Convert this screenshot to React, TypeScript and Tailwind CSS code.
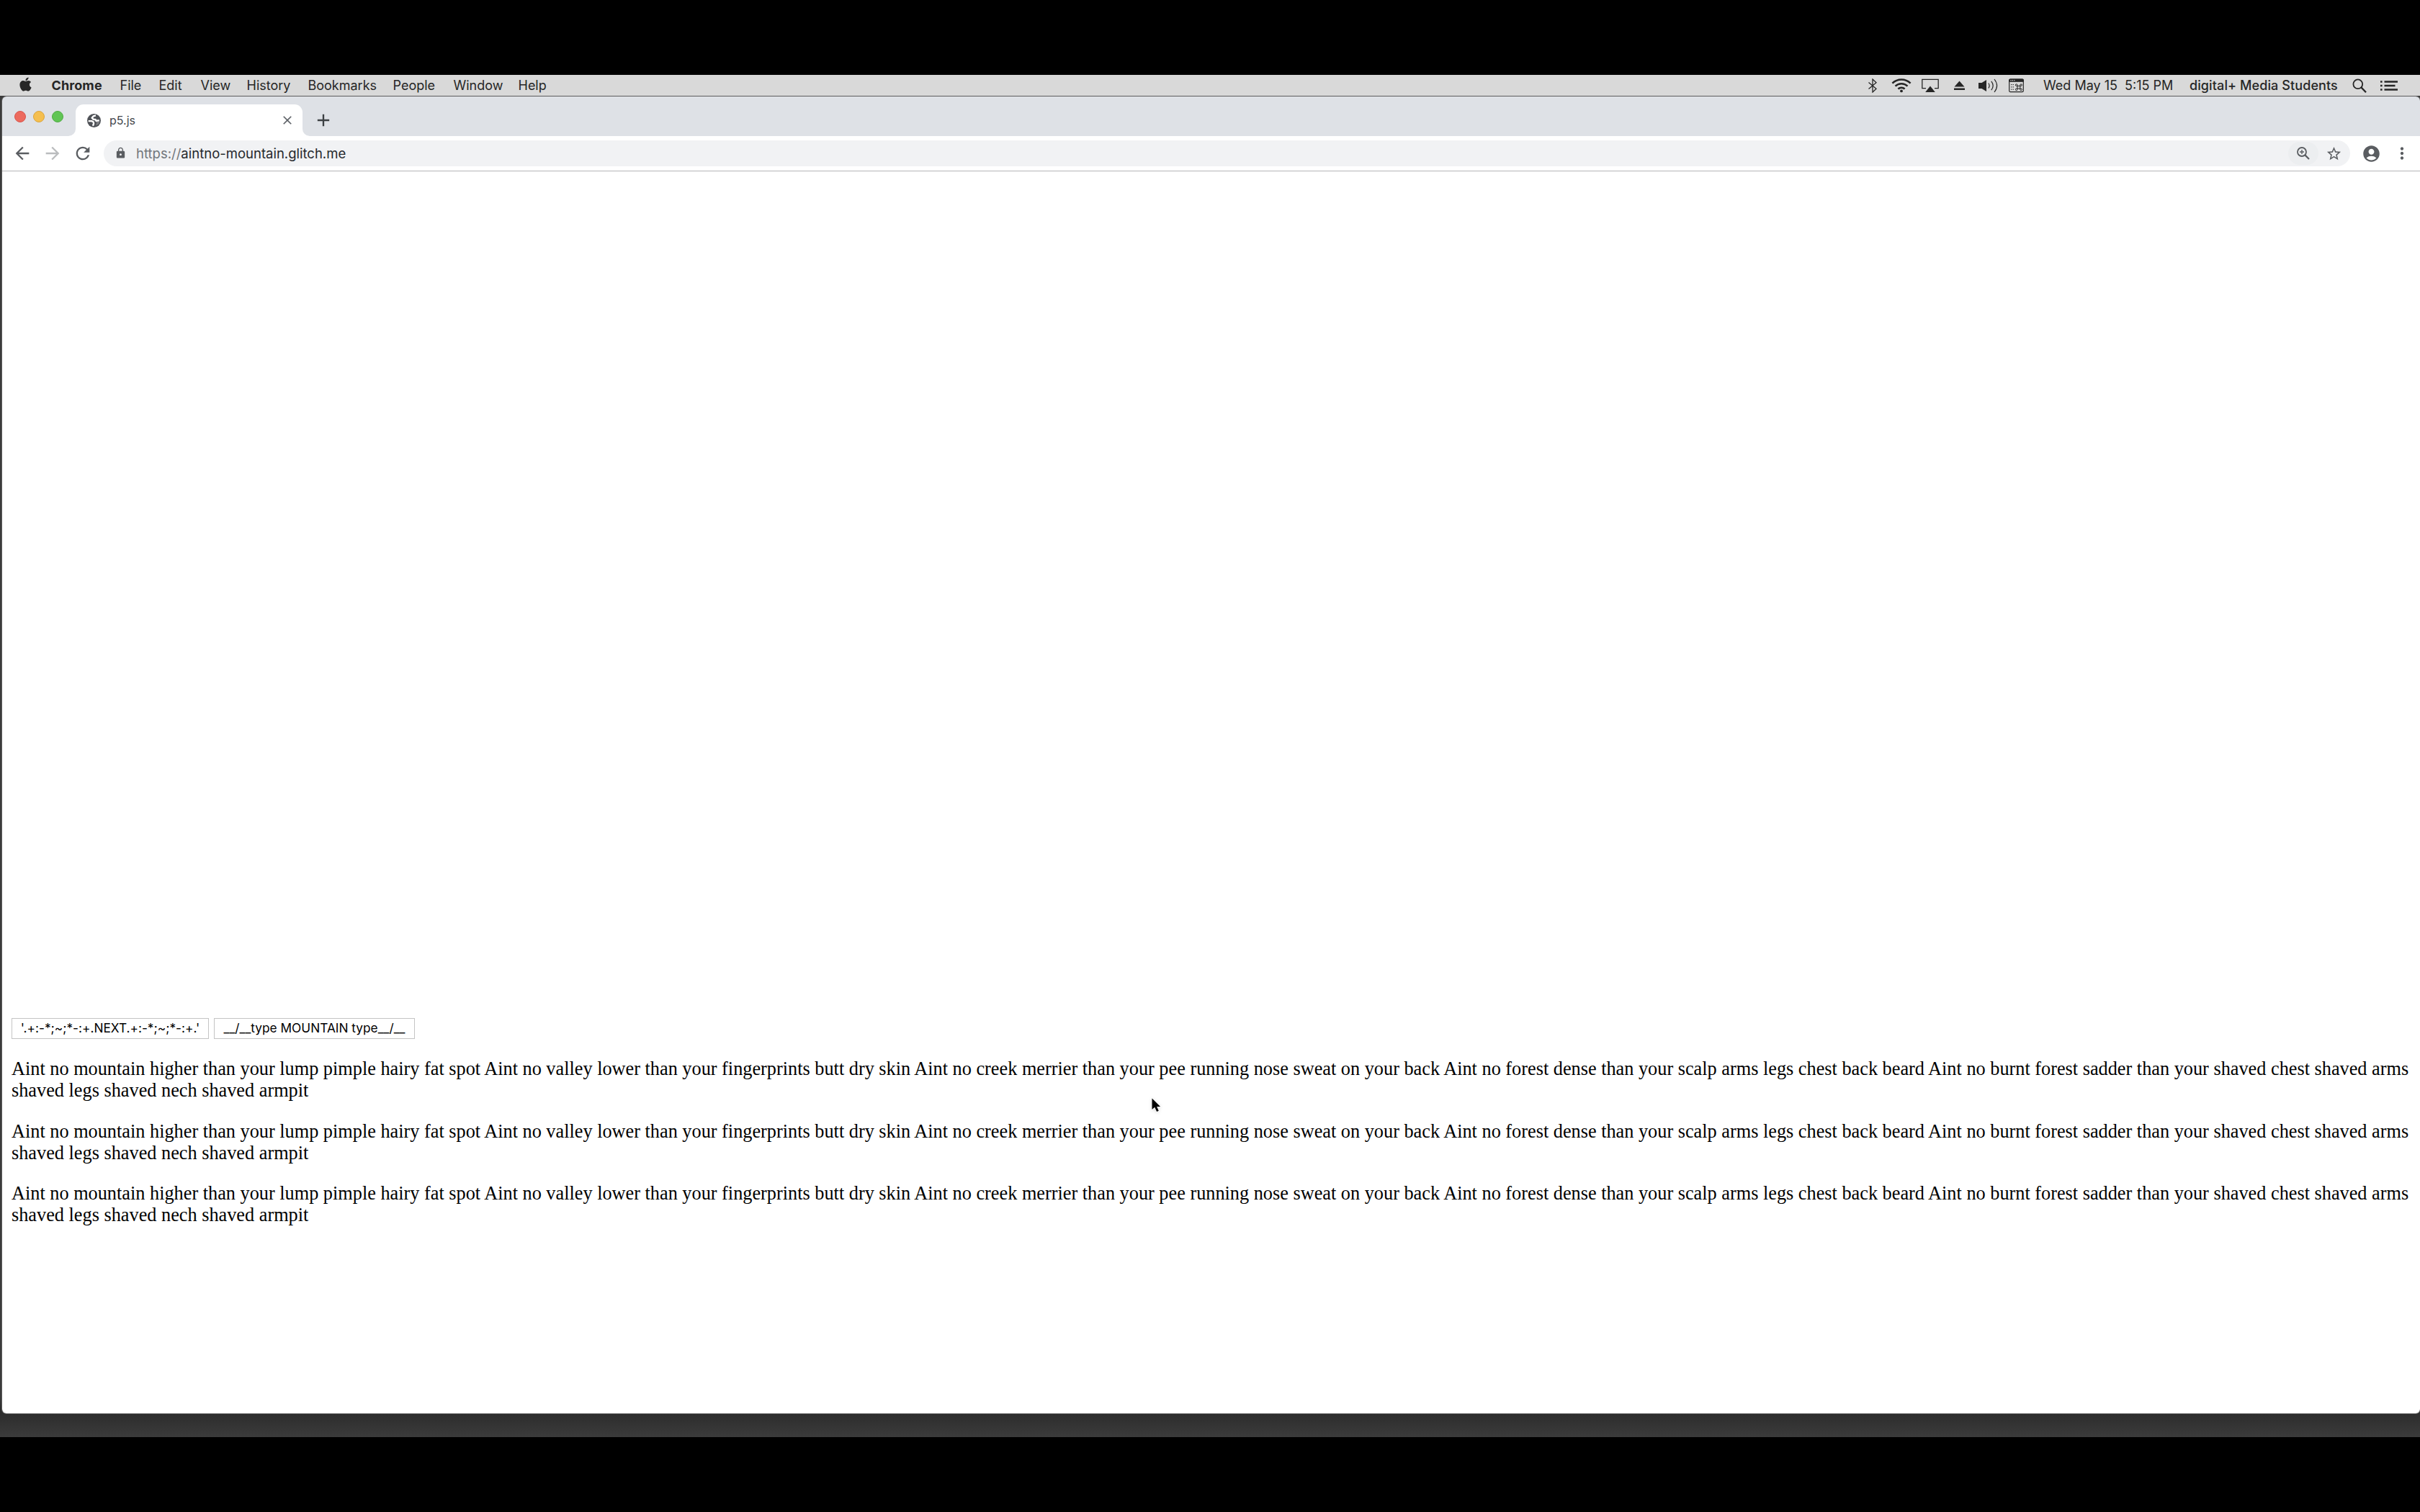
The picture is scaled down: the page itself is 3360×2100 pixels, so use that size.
import React from 'react';
import { FaApple } from 'react-icons/fa';
import {
  MdAccountCircle,
  MdAdd,
  MdArrowBack,
  MdArrowForward,
  MdClose,
  MdLock,
  MdMoreVert,
  MdRefresh,
  MdStarBorder,
} from 'react-icons/md';

const MENU = [
  { label: 'Chrome', className: 'w-[95px] font-bold tracking-[0.1px]' },
  { label: 'File', className: 'w-[54px]' },
  { label: 'Edit', className: 'w-[58px]' },
  { label: 'View', className: 'w-[64px]' },
  { label: 'History', className: 'w-[85px]' },
  { label: 'Bookmarks', className: 'w-[118px]' },
  { label: 'People', className: 'w-[84px]' },
  { label: 'Window', className: 'w-[90px]' },
  { label: 'Help', className: 'w-[60px]' },
];

const VERSE =
  'Aint no mountain higher than your lump pimple hairy fat spot Aint no valley lower than your fingerprints butt dry skin Aint no creek merrier than your pee running nose sweat on your back Aint no forest dense than your scalp arms legs chest back beard Aint no burnt forest sadder than your shaved chest shaved arms shaved legs shaved nech shaved armpit';

const StatusIcons: React.FC = () => (
  <div className="flex items-center text-[#262626]">
    {/* Bluetooth */}
    <svg className="w-[14px] h-[20px] mr-[19px]" viewBox="0 0 14 20" fill="none" stroke="currentColor" strokeWidth="1.3">
      <path d="M1.5 5.5 12 14.3 7 19V1l5 4.7L1.5 14.5" />
    </svg>
    {/* Wi-Fi */}
    <svg className="w-[28px] h-[20px] mr-[14px]" viewBox="0 0 28 20" fill="none" stroke="currentColor" strokeWidth="2.5">
      <path d="M1.4 6.6a18 18 0 0 1 25.2 0M5.5 10.6a12.2 12.2 0 0 1 17 0M9.4 14.5a6.6 6.6 0 0 1 9.2 0" />
      <circle cx="14" cy="17.4" r="1.9" fill="currentColor" stroke="none" />
    </svg>
    {/* AirPlay */}
    <svg className="w-[24px] h-[20px] mr-[21px]" viewBox="0 0 24 20" fill="none" stroke="currentColor" strokeWidth="1.3">
      <path d="M6 13.6H.8V1.4h22.4v12.2H18" />
      <path d="M12 10.4 18.8 19H5.2z" fill="currentColor" stroke="none" />
    </svg>
    {/* Eject */}
    <svg className="w-[15px] h-[20px] mr-[19px]" viewBox="0 0 15 20" fill="currentColor">
      <path d="M7.5 3.4 14.5 11.4H.5zM0 13.4h15V16H0z" />
    </svg>
    {/* Volume */}
    <svg className="w-[28px] h-[20px] mr-[14px]" viewBox="0 0 28 20" fill="none" stroke="currentColor" strokeWidth="1.2">
      <path d="M0 6h4.5L11 2v16l-6.5-4H0z" fill="currentColor" stroke="none" />
      <path d="M13.8 6.5q2.6 3.5 0 7M17.8 3.8q4.8 6.2 0 12.4M22 1q7.2 9 0 18" />
    </svg>
    {/* Keyboard viewer */}
    <svg className="w-[21px] h-[20px] mr-[27px]" viewBox="0 0 21 20" fill="none" stroke="currentColor" strokeWidth="1.2">
      <rect x=".7" y="1.2" width="19.6" height="17.4" rx="1.6" />
      <path d="M.7 4.2V2.4q0-1.2 1.2-1.2h17.2q1.2 0 1.2 1.2v1.8z" fill="currentColor" />
      <path d="M2.4 2.7h1.2M4.8 2.7H6M7.2 2.7h1.2" stroke="#d9d9d9" />
      <path d="M3 8.6h1.4M5.6 8.6H7M3 11.9h1.4M5.6 11.9H7M3 15.2h1.4M5.6 15.2H7" strokeWidth="1" />
      <path
        d="M12 10.4h3.8v3.6H12zM12 10.4h-1.3a1.3 1.3 0 1 1 1.3-1.3zM15.8 10.4h1.3a1.3 1.3 0 1 0-1.3-1.3zM12 14h-1.3a1.3 1.3 0 1 0 1.3 1.3zM15.8 14h1.3a1.3 1.3 0 1 1-1.3 1.3z"
        strokeWidth="1"
      />
    </svg>
  </div>
);

const MenuBar: React.FC = () => (
  <div className="flex h-[29px] shrink-0 items-center bg-[#d9d9d9] text-[18px] leading-none text-[#262626]">
    <FaApple className="ml-[25px] mr-[25.5px] -mt-[4px] h-[22px] w-[21px]" />
    {MENU.map(item => (
      <span key={item.label} className={`${item.className} shrink-0 whitespace-nowrap`}>
        {item.label}
      </span>
    ))}
    <div className="ml-auto flex items-center">
      <StatusIcons />
      <span className="w-[203px] whitespace-pre">{'Wed May 15  5:15 PM'}</span>
      <span className="w-[226px] whitespace-nowrap font-medium tracking-[0.1px]">digital+ Media Students</span>
      <svg className="h-[20px] w-[20px] mr-[19px]" viewBox="0 0 20 20" fill="none" stroke="currentColor" strokeWidth="1.8">
        <circle cx="7.8" cy="7.8" r="6.4" />
        <path d="m12.4 12.4 6.6 6.8" strokeWidth="2.3" />
      </svg>
      <svg className="h-[20px] w-[24px] mr-[31px]" viewBox="0 0 24 20" fill="none" stroke="currentColor" strokeWidth="2.3">
        <path d="M0 4.5h2.6M0 10h2.6M0 15.5h2.6M5.5 4.5H24M5.5 10h15M5.5 15.5H24" />
      </svg>
    </div>
  </div>
);

const TabStrip: React.FC = () => (
  <div className="flex h-[55px] shrink-0 items-end bg-[#dee1e6]">
    <div className="mb-[19px] ml-[17px] flex gap-[10px]">
      <span className="h-[16px] w-[16px] rounded-full border border-[#d9534b] bg-[#ec6a5e]" />
      <span className="h-[16px] w-[16px] rounded-full border border-[#dba53c] bg-[#f5bf4f]" />
      <span className="h-[16px] w-[16px] rounded-full border border-[#4fab43] bg-[#61c555]" />
    </div>
    {/* Active tab, with the flared bottom corners on either side */}
    <svg className="ml-[7px] h-[10px] w-[10px]" viewBox="0 0 10 10" fill="#fff">
      <path d="M10 0v10H0A10 10 0 0 0 10 0z" />
    </svg>
    <div className="flex h-[44px] w-[315px] items-center rounded-t-[11px] bg-white pl-[16px] pr-[11px]">
      {/* Default globe favicon */}
      <svg className="h-[19px] w-[19px]" viewBox="0 0 20 20">
        <circle cx="10" cy="10" r="10" fill="#4f5257" />
        <g fill="none" stroke="#fff" strokeWidth="2.5" strokeLinejoin="round">
          <path d="M12.6 2.6 9 3.6 7 6l2.200 2.200 2.800.2 1.200 2 4.400-.8" />
          <path d="M1.800 10.600h4.600l2.800 1.600.4 2.200-1.200 3.200" />
        </g>
        <path d="M12 9.200h6.200a8 8 0 0 1-5.800 8.200l1.400-3.400z" fill="#fff" fillOpacity=".25" />
      </svg>
      <span className="-mt-px ml-[12px] flex-1 text-[16px] leading-none text-[#45494d]">p5.js</span>
      <MdClose className="h-[20px] w-[20px] text-[#5f6368]" />
    </div>
    <svg className="h-[10px] w-[10px]" viewBox="0 0 10 10" fill="#fff">
      <path d="M0 0v10h10A10 10 0 0 1 0 0z" />
    </svg>
    <MdAdd className="mb-[8px] ml-[5px] h-[28px] w-[28px] text-[#3c4043]" />
  </div>
);

const Toolbar: React.FC = () => (
  <div className="flex h-[49px] shrink-0 items-center border-b border-[#b4b5b7] bg-white pl-[14px] pr-[12.5px] text-[#5a5d61]">
    <MdArrowBack className="h-[28px] w-[28px]" />
    <MdArrowForward className="ml-[14px] h-[28px] w-[28px] text-[#babcbe]" />
    <MdRefresh className="ml-[14px] h-[28px] w-[28px]" />
    <div className="ml-[15px] flex h-[36px] flex-1 items-center rounded-full bg-[#f1f2f4] pl-[15px] pr-[11px]">
      <MdLock className="-mt-[2px] h-[17px] w-[17px]" />
      <span className="ml-[13px] text-[18.5px] leading-none text-[#26292d]">
        <span className="text-[#72777c]">https://</span>aintno-mountain.glitch.me
      </span>
      <span className="ml-auto flex h-[32px] w-[42px] items-center justify-center rounded-full bg-[#eceef0]">
        <svg className="h-[18px] w-[18px]" viewBox="0 0 18 18" fill="none" stroke="currentColor" strokeWidth="1.8">
          <circle cx="7" cy="7" r="6" />
          <path d="m11.4 11.4 5.6 5.6" strokeWidth="2.2" />
          <path d="M4 7h6M7 4v6" strokeWidth="1.4" />
        </svg>
      </span>
      <MdStarBorder className="ml-[10px] h-[23px] w-[23px]" />
    </div>
    <MdAccountCircle className="ml-[16px] h-[27px] w-[27px]" />
    <MdMoreVert className="ml-[16px] h-[26px] w-[26px]" />
  </div>
);

const Page: React.FC = () => (
  <div className="relative flex-1 bg-white px-[13px] pt-[1176px] font-['Liberation_Serif',serif] text-[26.29px] leading-[30.2px] text-black">
    <div className="flex gap-[7px] font-['Inter',sans-serif] text-[17.3px] leading-none">
      <button className="h-[29px] w-[274px] whitespace-nowrap border border-[#c4c4c4] bg-white pb-[2px]">
        {"'.+:-*;~;*-:+.NEXT.+:-*;~;*-:+.'"}
      </button>
      <button className="h-[29px] w-[279px] whitespace-nowrap border border-[#c4c4c4] bg-white pb-[2px]">
        __/__type MOUNTAIN type__/__
      </button>
    </div>
    <div className="-mr-[10px] mt-[27px] flex flex-col gap-[26.2px]">
      {[0, 1, 2].map(i => (
        <p key={i}>{VERSE}</p>
      ))}
    </div>
    {/* Mouse pointer */}
    <svg className="absolute left-[1595px] top-[1286px] h-[24px] w-[17px] drop-shadow-sm" viewBox="0 0 17 24">
      <path d="M1.5 1.5v15.6l3.7-3.4 2.9 6.2 2.7-1.2-2.7-5.8h5z" fill="#000" stroke="#fff" strokeWidth="1.2" paintOrder="stroke" />
    </svg>
  </div>
);

const App: React.FC = () => (
  <div className="flex h-[2100px] w-[3360px] flex-col overflow-hidden bg-black py-[104px] font-['Inter',sans-serif]">
    <MenuBar />
    <div className="flex min-h-0 flex-1 flex-col bg-linear-to-b from-[#3b3b3b] from-97% via-[#2b2b2b] via-98% to-[#3b3b3b] pb-[33px] pl-[3px] pt-px">
      <div className="flex min-h-0 flex-1 flex-col overflow-hidden rounded-[6px] shadow-[0_0_0_1px_#5c5c5c]">
        <TabStrip />
        <Toolbar />
        <Page />
      </div>
    </div>
  </div>
);

export default App;
